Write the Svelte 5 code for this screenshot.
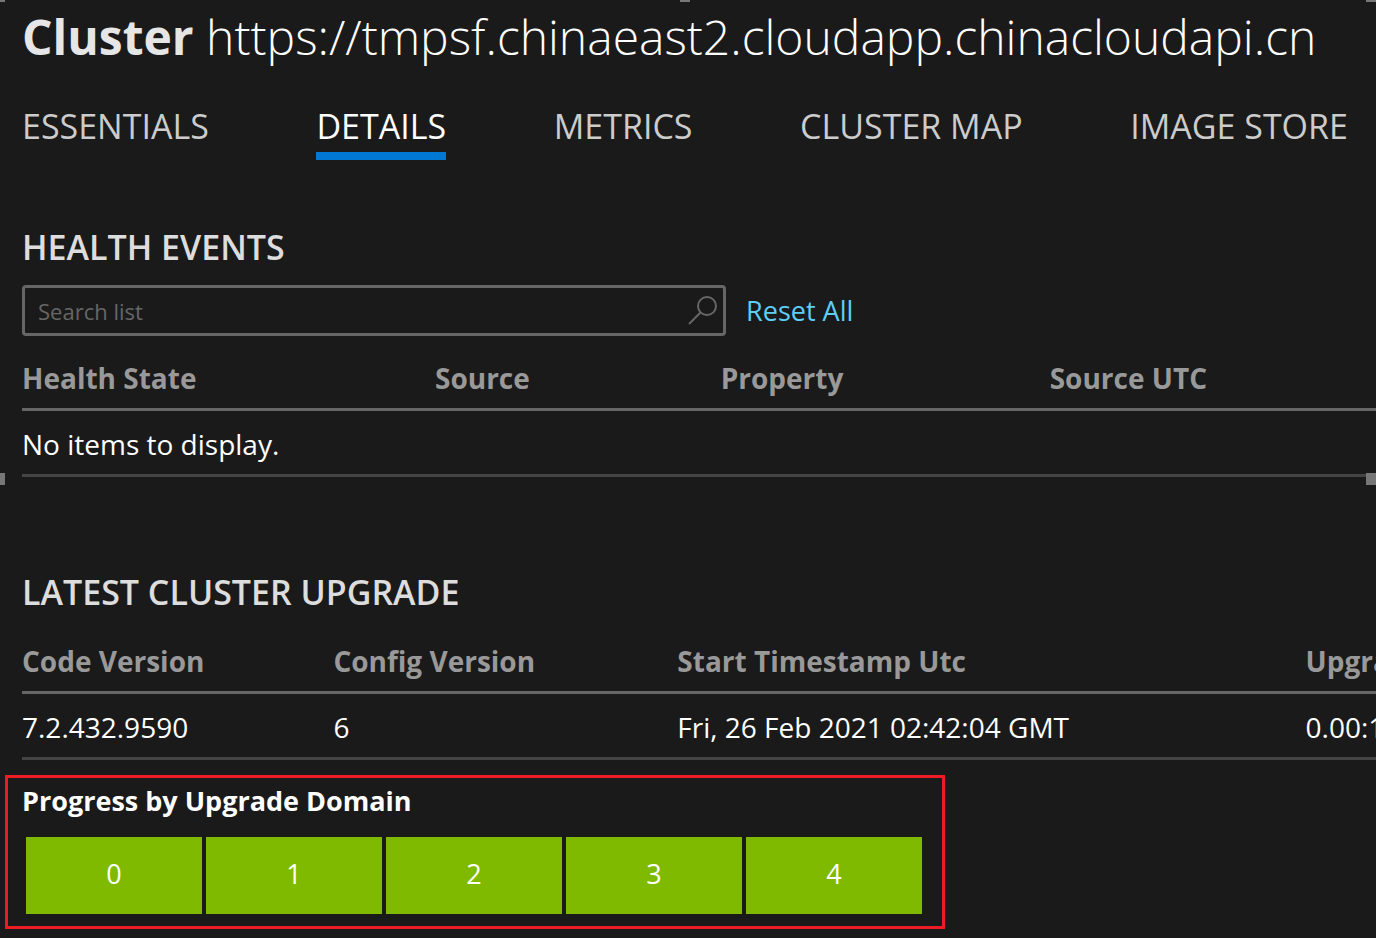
<script lang="ts">
  const tabs = ['ESSENTIALS', 'DETAILS', 'METRICS', 'CLUSTER MAP', 'IMAGE STORE'];
  const domains = [0, 1, 2, 3, 4];

  const healthColumns = [
    { name: 'Health State', width: 30.5 },
    { name: 'Source', width: 21.1 },
    { name: 'Property', width: 24.3 },
    { name: 'Source UTC', width: 24.1 }
  ];

  const upgradeColumns = [
    { name: 'Code Version', value: '7.2.432.9590', width: 23 },
    { name: 'Config Version', value: '6', width: 25.4 },
    { name: 'Start Timestamp Utc', value: 'Fri, 26 Feb 2021 02:42:04 GMT', width: 46.4 },
    { name: 'Upgrade', value: '0.00:1', width: 5.2 }
  ];

  let activeTab = $state('DETAILS');
  let search = $state('');
</script>

<main class="page">
  <span class="handle top-left"></span>
  <span class="handle top-center"></span>
  <span class="handle top-right"></span>
  <span class="handle middle-left"></span>
  <span class="handle middle-right"></span>

  <h1><strong>Cluster</strong> https://tmpsf.chinaeast2.cloudapp.chinacloudapi.cn</h1>

  <nav class="tabs">
    {#each tabs as tab}
      <button class="tab" class:active={activeTab === tab} onclick={() => activeTab = tab}>{tab}</button>
    {/each}
  </nav>

  <section class="health">
    <h2>HEALTH EVENTS</h2>
    <div class="filter">
      <div class="search">
        <input type="text" placeholder="Search list" aria-label="Search list" bind:value={search} />
        <svg viewBox="0 0 32 32" width="32" height="32" aria-hidden="true">
          <circle cx="20" cy="11" r="9" />
          <path d="M13.500 17.500 L2 29" />
        </svg>
      </div>
      <button class="reset" onclick={() => search = ''}>Reset All</button>
    </div>
    <table>
      <colgroup>
        {#each healthColumns as column}
          <col style:width="{column.width}%" />
        {/each}
      </colgroup>
      <thead>
        <tr>
          {#each healthColumns as column}
            <th>{column.name}</th>
          {/each}
        </tr>
      </thead>
      <tbody>
        <tr><td colspan="4">No items to display.</td></tr>
      </tbody>
    </table>
  </section>

  <section class="upgrade">
    <h2>LATEST CLUSTER UPGRADE</h2>
    <table>
      <colgroup>
        {#each upgradeColumns as column}
          <col style:width="{column.width}%" />
        {/each}
      </colgroup>
      <thead>
        <tr>
          {#each upgradeColumns as column}
            <th>{column.name}</th>
          {/each}
        </tr>
      </thead>
      <tbody>
        <tr>
          {#each upgradeColumns as column}
            <td>{column.value}</td>
          {/each}
        </tr>
      </tbody>
    </table>
  </section>

  <section class="progress">
    <h3>Progress by Upgrade Domain</h3>
    <div class="domains">
      {#each domains as domain}
        <div class="domain">{domain}</div>
      {/each}
    </div>
  </section>
</main>

<style>
  :global(body) {
    background: #1a1a1a;
  }

  .page {
    position: relative;
    box-sizing: border-box;
    min-height: 100vh;
    padding: 4px 0 9px 22px;
    overflow: hidden;
    background: #1a1a1a;
    color: #fff;
    font-family: "Open Sans", "Noto Sans", sans-serif;
    font-size: 28px;
    font-weight: 500;
    line-height: 36px;
  }

  h1, h2, h3 { margin: 0; white-space: nowrap; }

  h1 {
    font-size: 48px;
    font-weight: 300;
    line-height: 66px;
  }

  h1 strong { font-weight: 700; color: #e6e6e6; }

  h2 {
    color: #ddd;
    font-size: 34px;
    font-weight: 600;
    line-height: 44px;
  }

  h3 {
    font-size: 27px;
    font-weight: 700;
    line-height: 36px;
  }

  button {
    padding: 0;
    border: 0;
    background: none;
    font: inherit;
    cursor: pointer;
  }

  .tabs {
    display: flex;
    justify-content: space-between;
    margin: 34px 28px 0 0;
  }

  .tab {
    padding-bottom: 4px;
    border-bottom: 8px solid transparent;
    color: #ccc;
    font-size: 34px;
    font-weight: 400;
    line-height: 44px;
    white-space: nowrap;
  }

  .tab.active { border-color: #0078d4; color: #fff; }

  .health { margin-top: 65px; }

  .filter {
    display: flex;
    align-items: center;
    gap: 20px;
    margin-top: 16px;
  }

  .search {
    display: flex;
    align-items: center;
    box-sizing: border-box;
    width: 52%;
    height: 51px;
    padding: 0 4px 0 13px;
    border: 3px solid #666;
    border-radius: 4px;
  }

  .search input {
    flex: 1;
    min-width: 0;
    padding: 0;
    border: 0;
    outline: 0;
    background: none;
    color: #fff;
    font: inherit;
    font-size: 22px;
    font-weight: 400;
  }

  .search input::placeholder { color: #666; opacity: 1; }

  .search svg { fill: none; stroke: #666; stroke-width: 2; }

  .reset { color: #5fcdf5; font-size: 27px; white-space: nowrap; }

  table {
    width: 100%;
    border-collapse: collapse;
    table-layout: fixed;
  }

  th, td {
    height: 61px;
    padding: 2px 0 0;
    font-size: 28px;
    text-align: left;
    white-space: nowrap;
  }

  th {
    border-bottom: 3px solid #666;
    color: #999;
    font-weight: 700;
  }

  td { border-bottom: 3px solid #444; }

  .health table { margin-top: 9px; }

  .upgrade { margin-top: 93px; }

  .upgrade table { margin-top: 14px; }

  .progress {
    box-sizing: border-box;
    width: fit-content;
    margin: 15px 0 0 -17px;
    padding: 5px 20px 12px 14px;
    border: 3px solid #ed1c24;
  }

  .domains {
    display: flex;
    gap: 4px;
    margin: 18px 0 0 4px;
  }

  .domain {
    box-sizing: border-box;
    width: 176px;
    height: 77px;
    color: #fff;
    background: #80ba00;
    font-size: 27px;
    line-height: 74px;
    text-align: center;
  }

  /* selection grips round the edge of the view */
  .handle {
    position: absolute;
    width: 10px;
    height: 12px;
    background: #777;
  }

  .top-left { top: 0; left: 0; width: 5px; height: 2px; }
  .top-center { top: 0; left: calc(50% - 8px); height: 2px; }
  .top-right { top: 0; right: 0; height: 2px; }
  .middle-left { top: 473px; left: 0; width: 5px; }
  .middle-right { top: 473px; right: 0; }
</style>
